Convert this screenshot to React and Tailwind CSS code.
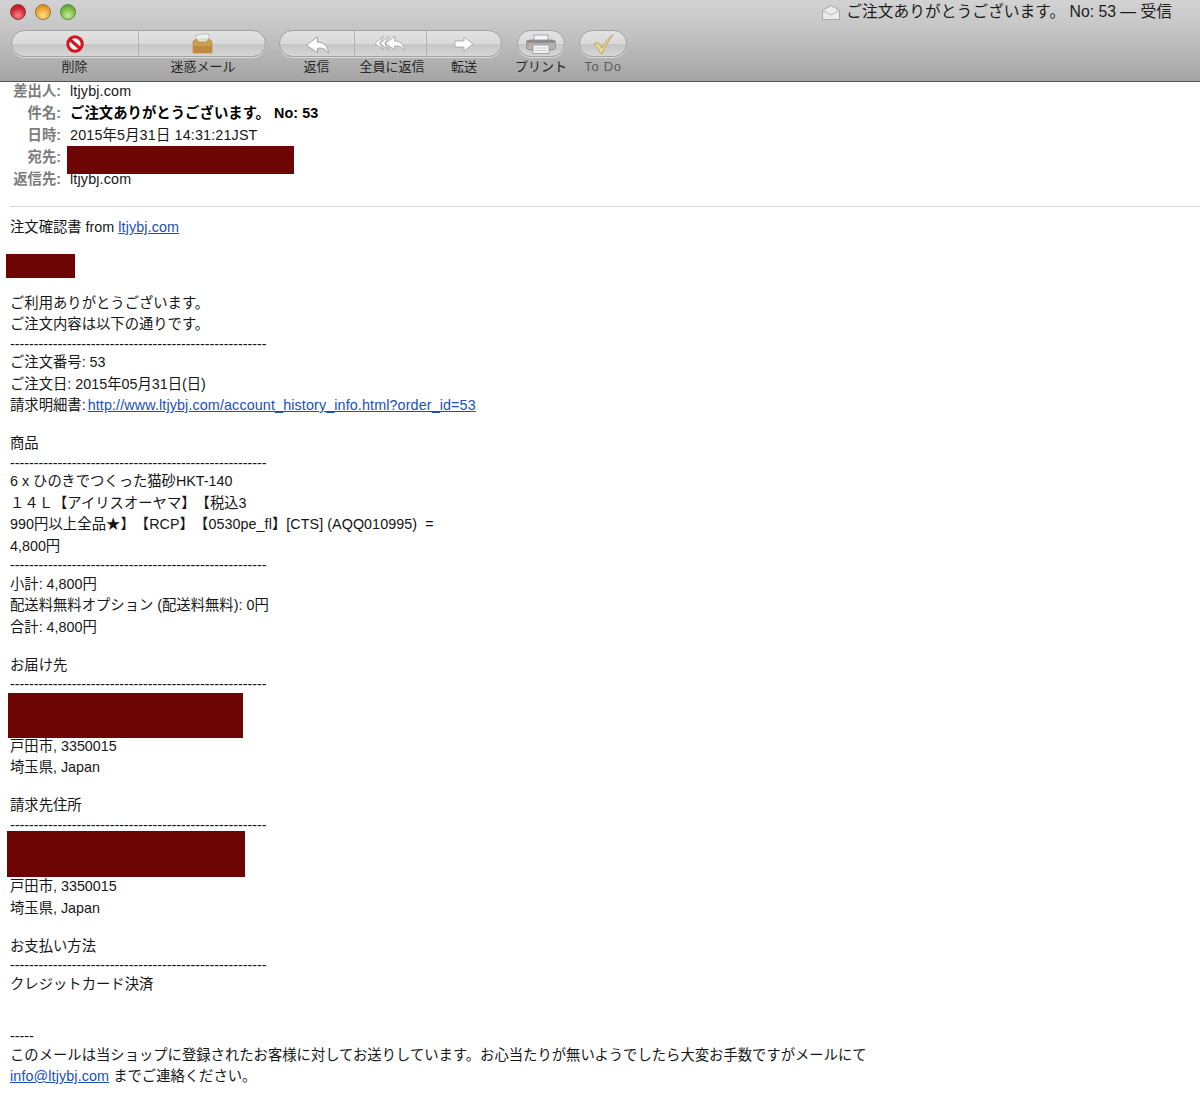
const FONT = "font-['Liberation_Sans','Noto_Sans_CJK_JP',sans-serif]";

function Lights() {
  return (
    <div className="flex gap-[9px]">
      <span className="w-4 h-4 rounded-full border border-[#8a3a3a] bg-[radial-gradient(circle_at_50%_75%,#f5878c,#d2232d_60%,#a81822)]" />
      <span className="w-4 h-4 rounded-full border border-[#9a7a30] bg-[radial-gradient(circle_at_50%_75%,#fbe08a,#eda030_60%,#c47a1c)]" />
      <span className="w-4 h-4 rounded-full border border-[#5a8a40] bg-[radial-gradient(circle_at_50%_75%,#c8ee90,#76b743_60%,#4f9429)]" />
    </div>
  );
}

const Stop = () => (
  <svg width="22" height="20" viewBox="0 0 22 20">
    <circle cx="11" cy="10" r="7.2" fill="#f4f4f4" stroke="#d5141c" strokeWidth="3" />
    <path d="M5.8 5.5 L16.2 14.5" stroke="#d5141c" strokeWidth="3" />
  </svg>
);
const Junk = () => (
  <svg width="24" height="22" viewBox="0 0 24 22">
    <path d="M6 8 L6 2.5 L12 1 L19 1 L19 8 Z" fill="#eef2ea" stroke="#999" strokeWidth=".5" />
    <path d="M9 5 H17 V9 H9 Z" fill="#d5e3cd" />
    <path d="M3 8 L7 6 L8 9 H17 L18 6 L22 8 V20 H3 Z" fill="#d09c50" stroke="#a8742c" strokeWidth=".5" />
    <path d="M3 13 H22 V20 H3 Z" fill="#c08a3e" />
  </svg>
);
const ReplyArrow = ({ x = 0 }) => (
  <path transform={`translate(${x} 0)`} d="M11 3 L2 10 L11 16 L11 12.5 C15 12 18 13 20 16.5 C20 11 16 7.5 11 7.5 Z" fill="#fdfdfd" stroke="#9a9a9a" strokeWidth=".7" />
);
const Reply = () => (
  <svg width="27" height="22" viewBox="0 0 22 18"><ReplyArrow /></svg>
);
const ReplyAll = () => (
  <svg width="33" height="21" viewBox="0 0 32 20">
    <path d="M9 3 L1 10 L9 16 L5.5 10 Z" fill="#fdfdfd" stroke="#9a9a9a" strokeWidth=".7" />
    <path d="M14 3 L6 10 L14 16 L10.5 10 Z" fill="#fdfdfd" stroke="#9a9a9a" strokeWidth=".7" />
    <ReplyArrow x={9} />
  </svg>
);
const Forward = () => (
  <svg width="22" height="20" viewBox="0 0 22 20">
    <path d="M2 7 H11 V3 L20 10 L11 17 V13 H2 Z" fill="#fdfdfd" stroke="#9a9a9a" strokeWidth=".7" />
  </svg>
);
const Printer = () => (
  <svg width="32" height="20" viewBox="0 0 32 20">
    <rect x="9" y="1" width="14" height="6" fill="#f5f5f5" stroke="#8c8c8c" strokeWidth=".7" />
    <rect x="1.5" y="6" width="29" height="10" rx="3.5" fill="#b4b4b4" stroke="#7c7c7c" strokeWidth=".7" />
    <rect x="1.5" y="6" width="29" height="3" rx="1.5" fill="#8e8e8e" />
    <rect x="8" y="11" width="16" height="8.5" fill="#f2f2f2" stroke="#8c8c8c" strokeWidth=".7" />
    <path d="M10 14 H22 M10 16.5 H22" stroke="#c4c4c4" strokeWidth=".8" />
    <circle cx="3.5" cy="11" r=".8" fill="#e8801c" />
  </svg>
);
const Check = () => (
  <svg width="24" height="22" viewBox="0 0 24 22">
    <path d="M3 11 L7 9.5 L11 15 C14 9 18 4.5 22 2 C18 7 14 13 11.5 20.5 L9.5 20.5 C8 17 6 14 3 11 Z" fill="#ecd88a" stroke="#a5944e" strokeWidth=".7" />
  </svg>
);

const pill = "h-[27px] shrink-0 rounded-full border border-[#a2a2a2] bg-[linear-gradient(#e2e2e2,#dadada_50%,#c6c6c6_52%,#d6d6d6)] shadow-[0_1px_0_#dcdcdc] flex";

function Segment({ w, sep, children }) {
  return (
    <div className={`h-full flex items-center justify-center ${w} ${sep ? "border-r border-[#b4b4b4]" : ""}`}>
      {children}
    </div>
  );
}

function Label({ w, muted, children }) {
  return (
    <div className={`${w} flex justify-center whitespace-nowrap text-[13px] leading-[20px] ${muted ? "text-[#5c5c5c] tracking-[0.7px]" : "text-[#262626]"}`}>
      {children}
    </div>
  );
}

function Toolbar() {
  return (
    <div className="h-[82px] border-b border-[#555] bg-[linear-gradient(#d2d2d2,#c6c6c6_35%,#a4a4a4)] flex flex-col">
      <div className="h-[30px] shrink-0 pt-[4px] pl-[10px] pr-[28px] flex items-start justify-between">
        <Lights />
        <div className="flex items-center gap-[6px] h-4 text-[15.75px] leading-4 whitespace-nowrap text-[#1c1c1c]">
          <svg width="18" height="15" viewBox="0 0 18 15">
            <path d="M.5 5.5 L9 .5 L17.5 5.5 V14.5 H.5 Z" fill="#ececec" stroke="#a8a8a8" />
            <path d="M.5 5.5 L9 10 L17.5 5.5" fill="none" stroke="#b8b8b8" />
          </svg>
          <span>ご注文ありがとうございます。 No: 53 — 受信</span>
        </div>
      </div>
      <div className="pl-[11px] flex">
        <div className="flex flex-col w-[255px]">
          <div className={`${pill} w-[255px]`}>
            <Segment w="w-[127px]" sep><Stop /></Segment>
            <Segment w="w-[126px]"><Junk /></Segment>
          </div>
          <div className="flex">
            <Label w="w-[127px]">削除</Label>
            <Label w="w-[128px]">
              <span className="ml-[2px]">迷惑メール</span>
            </Label>
          </div>
        </div>
        <div className="ml-[13px] flex flex-col w-[223px]">
          <div className={`${pill} w-[223px]`}>
            <Segment w="w-[75px]" sep><Reply /></Segment>
            <Segment w="w-[72px]" sep><ReplyAll /></Segment>
            <Segment w="w-[74px]"><Forward /></Segment>
          </div>
          <div className="flex">
            <Label w="w-[75px]">返信</Label>
            <Label w="w-[76px]">全員に返信</Label>
            <Label w="w-[68px]">転送</Label>
          </div>
        </div>
        <div className="ml-[15px] flex flex-col w-[48px]">
          <div className={`${pill} w-[48px] items-center justify-center`}><Printer /></div>
          <Label w="w-[48px]">プリント</Label>
        </div>
        <div className="ml-[14px] flex flex-col w-[48px]">
          <div className={`${pill} w-[48px] items-center justify-center`}><Check /></div>
          <Label w="w-[48px]" muted>To Do</Label>
        </div>
      </div>
    </div>
  );
}

function HeaderRow({ label, children }) {
  return (
    <div className="h-[18px] flex items-start leading-[18px]">
      <div className="w-[61px] text-right text-[#7c7c7c] font-bold">{label}</div>
      <div className="ml-[9px] tracking-[0.16px]">{children}</div>
    </div>
  );
}

function Headers() {
  return (
    <div className="flex flex-col gap-[4px]">
      <HeaderRow label="差出人:">ltjybj.com</HeaderRow>
      <HeaderRow label="件名:"><span className="font-bold text-black tracking-[0.06px]">ご注文ありがとうございます。 No: 53</span></HeaderRow>
      <HeaderRow label="日時:">2015年5月31日 14:31:21JST</HeaderRow>
      <HeaderRow label="宛先:">
        <div className="relative z-10 w-[227px] h-[28px] -ml-[3px] -mt-[2px] bg-[#6e0505]" />
      </HeaderRow>
      <HeaderRow label="返信先:">ltjybj.com</HeaderRow>
    </div>
  );
}

const L = ({ children }) => <div className="h-[21.5px] leading-[21.5px] whitespace-pre">{children}</div>;
const Dash = () => (
  <div className="h-[16.5px] leading-[16.5px] overflow-hidden whitespace-pre tracking-[-0.02px]">
    {"-".repeat(54)}
  </div>
);
const Gap = () => <div className="h-[16.5px]" />;
const A = ({ children }) => <a className="text-[#1a4fb8] underline tracking-[0.12px]">{children}</a>;

function Body() {
  return (
    <div className="pl-[10px]">
      <L>注文確認書 from <A>ltjybj.com</A></L>
      <div className="mt-[15px] mb-[15px] -ml-[4px] w-[69px] h-[24px] bg-[#6e0505]" />
      <L>ご利用ありがとうございます。</L>
      <L>ご注文内容は以下の通りです。</L>
      <Dash />
      <L>ご注文番号: 53</L>
      <L>ご注文日: 2015年05月31日(日)</L>
      <L>請求明細書:<span className="ml-[2px]"><A>http://www.ltjybj.com/account_history_info.html?order_id=53</A></span></L>
      <Gap />
      <L>商品</L>
      <Dash />
      <L>6 x ひのきでつくった猫砂HKT-140</L>
      <L>１４Ｌ【アイリスオーヤマ】【税込3</L>
      <L><span className="tracking-[0.06px]">990円以上全品★】【RCP】【0530pe_fl】[CTS] (AQQ010995)  =</span></L>
      <L>4,800円</L>
      <Dash />
      <L>小計: 4,800円</L>
      <L>配送料無料オプション (配送料無料): 0円</L>
      <L>合計: 4,800円</L>
      <Gap />
      <L>お届け先</L>
      <Dash />
      <div className="relative z-10 -mb-[2px] -ml-[2px] w-[235px] h-[45px] bg-[#6e0505]" />
      <L>戸田市, 3350015</L>
      <L>埼玉県, Japan</L>
      <Gap />
      <L>請求先住所</L>
      <Dash />
      <div className="relative z-10 -mt-[2px] -mb-[1px] -ml-[3px] w-[238px] h-[46px] bg-[#6e0505]" />
      <L>戸田市, 3350015</L>
      <L>埼玉県, Japan</L>
      <Gap />
      <L>お支払い方法</L>
      <Dash />
      <L>クレジットカード決済</L>
      <Gap />
      <Gap />
      <div className="h-[16.5px] leading-[16.5px]">-----</div>
      <L>このメールは当ショップに登録されたお客様に対してお送りしています。お心当たりが無いようでしたら大変お手数ですがメールにて</L>
      <L><A>info@ltjybj.com</A> までご連絡ください。</L>
    </div>
  );
}

export default function App() {
  return (
    <div className={`${FONT} [text-spacing-trim:space-all] w-[1200px] h-[1096px] overflow-hidden bg-white text-[14.34px] text-[#161616]`}>
      <Toolbar />
      <Headers />
      <div className="mt-[18px] mb-[10px] ml-[10px] border-t border-[#d8d8d8]" />
      <Body />
    </div>
  );
}
